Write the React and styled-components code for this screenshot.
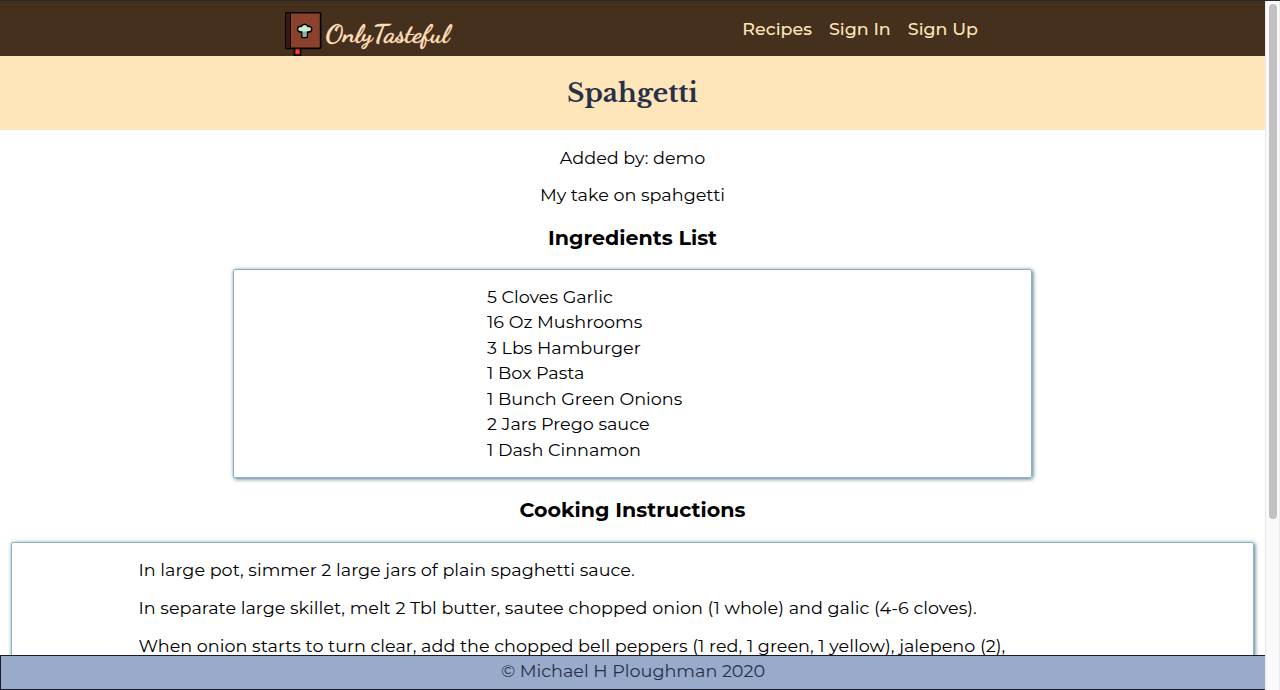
import React from 'react';
import styled, { createGlobalStyle } from 'styled-components';

const GlobalStyle = createGlobalStyle`
  * { box-sizing: border-box; }
  body { margin: 0; background: #fff; overflow: hidden; }
  h1, h2, p, ul { margin: 0; padding: 0; }
`;

const Window = styled.div`
  display: flex;
  height: 690px;
  border-top: 1px solid #28282d;
  font: 400 17.6px/25.5px Montserrat, Inter, "Liberation Sans", sans-serif;
  color: #000;
`;

const Page = styled.div`
  flex: 1;
  min-width: 0;
  display: flex;
  flex-direction: column;
`;

const Header = styled.header`
  flex: none;
  height: 55px;
  display: flex;
  justify-content: space-between;
  padding: 0 287px 0 285px;
  background: #44301d;
  color: #ffe5b9;
`;

const Brand = styled.a`
  display: flex;
  gap: 3.5px;
  padding-top: 11px;
`;

const BrandName = styled.span`
  padding-top: 5px;
  font: 700 26.6px/34px "Dancing Script", "Liberation Serif", serif;
  color: #ffdfba;
  -webkit-text-stroke: 0.3px #ffdfba;
`;

const Nav = styled.nav`
  display: flex;
  gap: 17px;
  padding-top: 15px;
`;

const NavLink = styled.a`
  font-size: 17.5px;
  font-weight: 500;
  white-space: nowrap;
`;

const Banner = styled.div`
  flex: none;
  height: 74px;
  background: #ffe5ba;
  text-align: center;
`;

const Title = styled.h1`
  font: 700 26.4px/74px "Libre Baskerville", "Liberation Serif", serif;
  color: #273048;
`;

const Main = styled.main`
  flex: 1;
  min-height: 0;
  overflow: hidden;
  display: flex;
  flex-direction: column;
  align-items: center;
  padding-top: 15px;
`;

const Meta = styled.p`
  margin-bottom: 11.5px;
`;

const Heading = styled.h2`
  margin: ${(p) => p.$margin};
  font-size: 20.6px;
  line-height: 30px;
`;

const Card = styled.section`
  flex: none;
  width: ${(p) => p.$width}px;
  height: ${(p) => p.$height}px;
  padding: ${(p) => p.$padding};
  border: 1px solid #8fb0c4;
  border-radius: 2px;
  box-shadow: 1px 1px 4px 0 #4d7588;
`;

const Ingredients = styled.ul`
  list-style: none;
`;

const Line = styled.li`
  white-space: nowrap;
`;

const Step = styled.p`
  margin-bottom: 12.5px;
  letter-spacing: 0.012px;
  white-space: nowrap;
`;

const Footer = styled.footer`
  flex: none;
  height: 35px;
  border: 1px solid #171b2b;
  border-right: 0;
  background: #99aacb;
  color: #273048;
  text-align: center;
  line-height: 30px;
`;

const ScrollTrack = styled.div`
  flex: none;
  width: 15px;
  padding: 3px 3px 0;
  border-left: 1px solid #e8e8e8;
  border-right: 1px solid #ededed;
  background: #fafafa;
`;

const ScrollThumb = styled.div`
  width: 8px;
  height: 515px;
  border-radius: 4px;
  background: #c1c1c1;
`;

const ingredients = [
  '5 Cloves Garlic',
  '16 Oz Mushrooms',
  '3 Lbs Hamburger',
  '1 Box Pasta',
  '1 Bunch Green Onions',
  '2 Jars Prego sauce',
  '1 Dash Cinnamon',
];

const steps = [
  'In large pot, simmer 2 large jars of plain spaghetti sauce.',
  'In separate large skillet, melt 2 Tbl butter, sautee chopped onion (1 whole) and galic (4-6 cloves).',
  'When onion starts to turn clear, add the chopped bell peppers (1 red, 1 green, 1 yellow), jalepeno (2),',
];

const CookbookIcon = () => (
  <svg width="37" height="44" viewBox="0 0 37 44">
    <path d="M9.5 36h6v9h-6z" fill="#ff3d2e" stroke="#000" strokeWidth="1.6" />
    <path d="M9 42.2h7V44H9z" fill="#000" />
    <rect x="0.8" y="0.8" width="34.8" height="35.6" rx="0.8" fill="#8b422d" stroke="#000" strokeWidth="1.6" />
    <path d="M1.5 1.5h3.2v34.2H1.5z" fill="#3a1812" />
    <path d="M5.3 1v35" stroke="#000" strokeWidth="1.3" />
    <path
      d="M16.9 25.4v-5.4c-2.4.3-4.4-.7-4.4-2.8 0-2 1.8-3.1 3.8-2.8.5-1.4 1.7-2.1 3.3-2.1s2.8.7 3.3 2.1c2-.3 3.8.8 3.8 2.8 0 2.1-2 3.1-4.4 2.8v5.4z"
      fill="#c6eccd"
      stroke="#000"
      strokeWidth="1.5"
      strokeLinejoin="round"
    />
    <path d="M17.7 19.6h3.8v5h-3.8z" fill="#8fb0a5" />
  </svg>
);

export default function App() {
  return (
    <>
      <GlobalStyle />
      <Window>
        <Page>
          <Header>
            <Brand>
              <CookbookIcon />
              <BrandName>OnlyTasteful</BrandName>
            </Brand>
            <Nav>
              <NavLink>Recipes</NavLink>
              <NavLink>Sign In</NavLink>
              <NavLink>Sign Up</NavLink>
            </Nav>
          </Header>
          <Banner>
            <Title>Spahgetti</Title>
          </Banner>
          <Main>
            <Meta>Added by: demo</Meta>
            <Meta>My take on spahgetti</Meta>
            <Heading $margin="4px 0 16px">Ingredients List</Heading>
            <Card $width={799} $height={209} $padding="13.6px 0 0 253px">
              <Ingredients>
                {ingredients.map((text) => (
                  <Line key={text}>{text}</Line>
                ))}
              </Ingredients>
            </Card>
            <Heading $margin="17px 0">Cooking Instructions</Heading>
            <Card $width={1243} $height={400} $padding="14px 0 0 126.5px">
              {steps.map((text) => (
                <Step key={text}>{text}</Step>
              ))}
            </Card>
          </Main>
          <Footer>© Michael H Ploughman 2020</Footer>
        </Page>
        <ScrollTrack>
          <ScrollThumb />
        </ScrollTrack>
      </Window>
    </>
  );
}
